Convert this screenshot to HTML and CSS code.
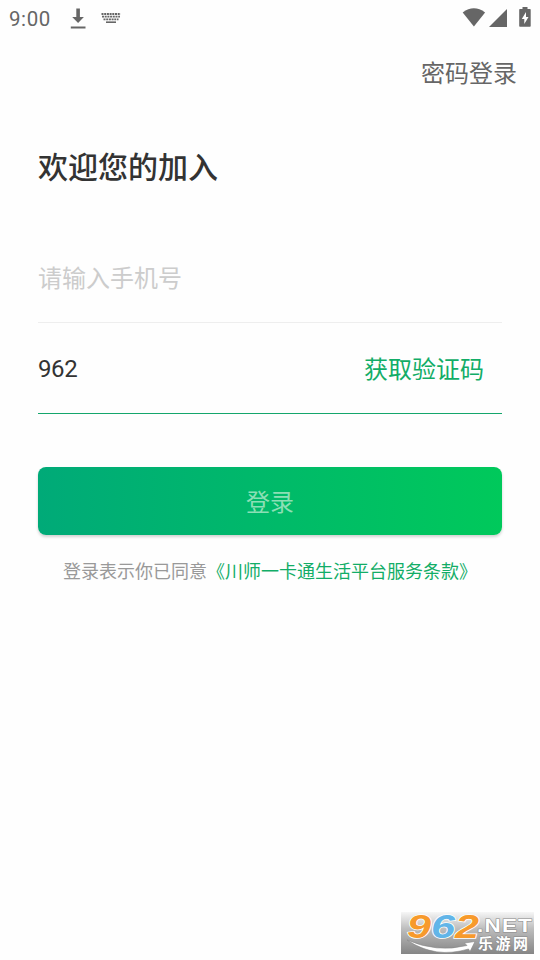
FILE: index.html
```html
<!DOCTYPE html>
<html lang="zh-CN">
<head>
<meta charset="utf-8">
<title>登录</title>
<link rel="stylesheet" href="styles.css">
</head>
<body>
<header class="status-bar">
  <span class="clock">9:00</span>
  <svg class="download" width="16" height="22" viewBox="0 0 16 22" fill="#666"><path d="M6.300 .5h3.600v8.500h4L8.100 15 2.200 9h4.100zM.8 18.600h14.700v1.900H.8z"/></svg>
  <svg class="keyboard" width="20" height="12" viewBox="0 0 20 12" fill="none" stroke="#666"><path d="M.5 2h19M1 4.700h18M2.500 7.400h15" stroke-width="1.800" stroke-dasharray="2 .7"/><path d="M5 10.200h10" stroke-width="1.600"/></svg>
  <svg class="wifi" width="24" height="19" viewBox="0 0 24 19" fill="#666"><path d="M.7 4.500Q11.900-3.900 23.100 4.500L11.900 18.500z"/></svg>
  <svg class="signal" width="18" height="18" viewBox="0 0 18 18" fill="#666"><path d="M18 0v18H0z"/></svg>
  <svg class="battery" width="12" height="20" viewBox="0 0 12 20"><path fill="#666" d="M3.500 0h5v2H11q.7 0 .7.700V19q0 .8-.7.800H1q-.8 0-.8-.8V2.700Q.2 2 1 2h2.500z"/><path fill="#fff" d="M7 5 2.800 12h2.500v5l4.200-7H7z"/></svg>
</header>
<nav class="switch-login"><a>密码登录</a></nav>
<main>
  <h1>欢迎您的加入</h1>
  <div class="field phone"><span>请输入手机号</span></div>
  <div class="field code"><span class="value">962</span><a>获取验证码</a></div>
  <button class="submit">登录</button>
  <p class="terms">登录表示你已同意<a>《川师一卡通生活平台服务条款》</a></p>
</main>
<svg class="watermark" width="133" height="42" viewBox="0 0 133 42">
  <defs><linearGradient id="shade" x1="0" y1="0" x2="0" y2="1"><stop offset="0" stop-color="#f6f6f6"/><stop offset=".4" stop-color="#bdbdbd"/><stop offset="1" stop-color="#858585"/></linearGradient></defs>
  <path fill="url(#shade)" d="M0 0h133v42H0z"/>
  <path class="swoosh" d="M6 28Q36 41 66 33.500L63.500 31 74 29.500 69 39.500 67.500 37Q34 47 6 28z"/>
  <g class="digits"><text x="6" y="25.500" textLength="24" lengthAdjust="spacingAndGlyphs" fill="#f79a2c">9</text><text x="30" y="25.500" textLength="24" lengthAdjust="spacingAndGlyphs" fill="#62b5e8">6</text><text x="54" y="25.500" textLength="24" lengthAdjust="spacingAndGlyphs" fill="#f79a2c">2</text></g>
  <text class="net" x="76" y="20" textLength="56" lengthAdjust="spacingAndGlyphs">.NET</text>
  <text class="site" x="77" y="37">乐游网</text>
</svg>
</body>
</html>
```

FILE: styles.css
```css
* { box-sizing: border-box; }
body {
  position: relative;
  height: 960px;
  margin: 0;
  overflow: hidden;
  background: #fefefe;
  color: #333;
  font-family: Roboto, "Noto Sans CJK SC", sans-serif;
}
.status-bar { display: flex; align-items: flex-start; height: 38px; padding: 0 9px; }
.clock { width: 61px; padding-top: 7px; color: #666; font-size: 20.500px; line-height: 24px; letter-spacing: .6px; }
.download { margin-top: 8px; }
.keyboard { margin: 12px 0 0 15px; }
.wifi { margin: 8px 0 0 auto; }
.signal { margin: 9px 0 0 3px; }
.battery { margin: 7px 0 0 12px; }
.switch-login { display: flex; justify-content: flex-end; height: 71px; padding: 18px 23px 0 0; color: #666; font-size: 24px; line-height: 36px; }
main { padding: 36px 38px 0; }
h1 { margin: 0 0 43px; font-size: 30px; font-weight: 500; line-height: 46px; }
.field { display: flex; align-items: center; justify-content: space-between; font-size: 24px; line-height: 36px; }
.phone { height: 89px; padding-top: 1px; border-bottom: 1px solid #eee; color: #ccc; }
.code { height: 91px; padding: 2px 18px 0 0; border-bottom: 1px solid #14a66c; }
.value { letter-spacing: -.4px; }
.code a { padding-top: 1px; color: #12ad67; }
.submit {
  display: block;
  width: 100%;
  height: 68px;
  margin: 53px 0 19px;
  padding: 3px 0 0;
  border: 0;
  border-radius: 8px;
  background: linear-gradient(90deg, #00aa78, #00c95b);
  box-shadow: 0 2px 3px rgba(0, 0, 0, .18);
  color: #8cdfb5;
  font: 24px/36px Roboto, "Noto Sans CJK SC", sans-serif;
}
.terms { margin: 0; color: #999; font-size: 18px; line-height: 36px; text-align: center; white-space: nowrap; }
.terms a { color: #12ad67; }
.watermark { position: absolute; left: 401px; top: 912px; overflow: visible; }
.watermark text { font-family: "Liberation Sans", sans-serif; font-weight: 700; paint-order: stroke; }
.digits { font-size: 33px; font-style: italic; stroke: #fff; stroke-width: 1.500px; }
.watermark .net { font-size: 18.500px; letter-spacing: 1px; fill: #fff; stroke: #888; stroke-width: 1px; }
.watermark .site { font-family: "Noto Sans CJK SC", sans-serif; font-size: 15px; letter-spacing: 2.500px; fill: #fff; stroke: #888; stroke-width: 1px; }
.swoosh { fill: #fff; stroke: #888; stroke-width: .6px; }
```
